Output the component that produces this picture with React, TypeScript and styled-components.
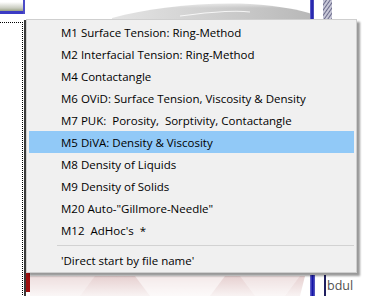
import styled, { createGlobalStyle } from "styled-components";

const Global = createGlobalStyle`
    html, body {
        margin: 0;
        padding: 0;
        background: #ffffff;
    }
`;

const Stage = styled.div`
    position: relative;
    width: 376px;
    height: 296px;
    overflow: hidden;
    background: #ffffff;
`;

const Backdrop = styled.svg`
    position: absolute;
    left: 0;
    top: 0;
`;

const Caption = styled.span`
    position: absolute;
    left: 327px;
    top: 277px;
    font-family: "Open Sans", "Noto Sans", sans-serif;
    font-size: 12.5px;
    color: #505050;
`;

const Menu = styled.div`
    position: absolute;
    left: 26px;
    top: 19px;
    width: 331px;
    box-sizing: border-box;
    padding: 1px 2px;
    background: #f0f0f0;
    border: 1px solid #cfcfcf;
    box-shadow: 3px 3px 2px rgba(0, 0, 0, 0.4);
    font-family: "Open Sans", "Noto Sans", sans-serif;
    font-size: 11.5px;
    color: #000;
`;

const Item = styled.div<{ $active?: boolean }>`
    display: flex;
    align-items: center;
    height: 22px;
    padding-left: 32px;
    white-space: pre;
    background: ${(p) => (p.$active ? "#91c9f7" : "transparent")};
`;

const Separator = styled.div`
    height: 1px;
    margin: 4px 0 3px 28px;
    background: #d2d2d2;
`;

const items = [
    "M1 Surface Tension: Ring-Method",
    "M2 Interfacial Tension: Ring-Method",
    "M4 Contactangle",
    "M6 OViD: Surface Tension, Viscosity & Density",
    "M7 PUK:  Porosity,  Sorptivity, Contactangle",
    "M5 DiVA: Density & Viscosity",
    "M8 Density of Liquids",
    "M9 Density of Solids",
    'M20 Auto-"Gillmore-Needle"',
    "M12  AdHoc's  *",
];

function Background() {
    return (
        <Backdrop width="376" height="296" viewBox="0 0 376 296">
            <defs>
                <linearGradient id="bar" x1="0" y1="0" x2="0" y2="1">
                    <stop offset="0" stopColor="#ffffff" />
                    <stop offset="0.6" stopColor="#c9ccc0" />
                    <stop offset="1" stopColor="#8c9470" />
                </linearGradient>
                <linearGradient id="swoosh" x1="0" y1="0" x2="1" y2="0">
                    <stop offset="0" stopColor="#e4e4e4" />
                    <stop offset="0.5" stopColor="#cfcfcf" />
                    <stop offset="1" stopColor="#b8b8b8" />
                </linearGradient>
                <linearGradient id="fadeTop" x1="0" y1="0" x2="0" y2="1">
                    <stop offset="0" stopColor="#ffffff" stopOpacity="0.9" />
                    <stop offset="1" stopColor="#ffffff" stopOpacity="0" />
                </linearGradient>
                <linearGradient id="pink" x1="0" y1="0" x2="0" y2="1">
                    <stop offset="0" stopColor="#dcbcbc" />
                    <stop offset="1" stopColor="#f6eeee" />
                </linearGradient>
                <linearGradient id="blue" x1="0" y1="0" x2="1" y2="0">
                    <stop offset="0" stopColor="#7070d0" />
                    <stop offset="0.5" stopColor="#1414a8" />
                    <stop offset="1" stopColor="#6060c0" />
                </linearGradient>
                <pattern id="hatch" width="3" height="3" patternUnits="userSpaceOnUse" patternTransform="rotate(35)">
                    <rect width="3" height="3" fill="#c8c8d8" />
                    <rect width="1" height="3" fill="#6a6a8a" />
                </pattern>
            </defs>

            {/* title bar corner of the window behind */}
            <rect x="0" y="2" width="24" height="10" fill="url(#bar)" />
            <rect x="0" y="11" width="25" height="3" fill="#3b3bc4" />
            <rect x="23" y="0" width="2" height="14" fill="#4c4cc8" />

            {/* dotted focus frame and window edge */}
            <line x1="0" y1="22.5" x2="22" y2="22.5" stroke="#000" strokeDasharray="1 1" />
            <line x1="22.5" y1="22" x2="22.5" y2="296" stroke="#000" strokeDasharray="1 1" />
            <rect x="24" y="20" width="2" height="276" fill="#3a3a3a" />
            <rect x="26" y="272" width="4" height="20" fill="#a01010" />

            {/* grey swoosh logo, top */}
            <path d="M112 18 C150 8 200 2 250 4 C280 6 300 10 312 14 L312 19 L112 19 Z" fill="url(#swoosh)" />
            <path d="M180 16 C210 12 235 10 250 12" stroke="#ffffff" strokeWidth="1.2" fill="none" opacity="0.8" />
            <rect x="100" y="0" width="215" height="8" fill="url(#fadeTop)" />

            {/* vertical bars right */}
            <rect x="310" y="0" width="4" height="19" fill="url(#blue)" />
            <rect x="323" y="0" width="9" height="19" fill="url(#hatch)" />
            <rect x="310" y="275" width="5" height="21" fill="url(#blue)" />
            <rect x="324" y="275" width="2" height="21" fill="#202060" />

            {/* pink shapes, bottom */}
            <path d="M30 276 L305 276 L300 296 L30 296 Z" fill="url(#pink)" opacity="0.7" />
            <path d="M135 276 L225 276 L210 296 L150 296 Z" fill="#ffffff" opacity="0.55" />
            <path d="M240 276 L300 276 L285 296 L255 296 Z" fill="#ffffff" opacity="0.35" />
            <path d="M30 276 L95 276 L80 296 L30 296 Z" fill="#ffffff" opacity="0.3" />
        </Backdrop>
    );
}

function App() {
    return (
        <Stage>
            <Global />
            <Background />
            <Caption>bdul</Caption>
            <Menu>
                {items.map((t, i) => (
                    <Item key={t} $active={i === 5}>
                        {t}
                    </Item>
                ))}
                <Separator />
                <Item>'Direct start by file name'</Item>
            </Menu>
        </Stage>
    );
}

export default App;
